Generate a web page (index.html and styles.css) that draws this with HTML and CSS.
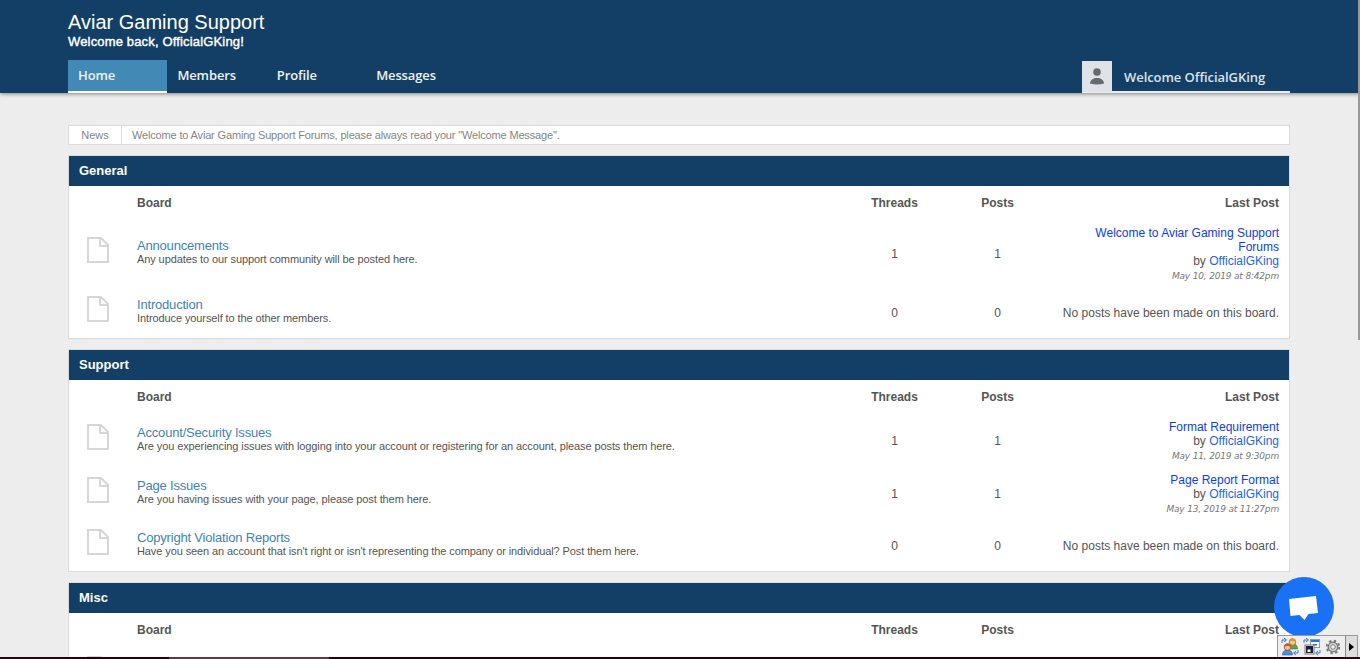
FILE: index.html
```
<!DOCTYPE html>
<html lang="en">
<head>
    <meta charset="UTF-8">
    <meta name="viewport" content="width=device-width, initial-scale=1.0">
    <title>Aviar Gaming Support</title>
    <link rel="stylesheet" href="styles.css">
</head>
<body>
    <svg width="0" height="0" class="sprites">
        <symbol id="page" viewBox="0 0 22 26">
            <path d="M1 1H14L21 8V25H1Z M13 1V9H21" fill="none" stroke="#d6d6d6" stroke-width="2"/>
        </symbol>
    </svg>
    <header class="header">
        <div class="wrapper">
            <h1 class="title">Aviar Gaming Support</h1>
            <div class="subtitle">Welcome back, OfficialGKing!</div>
            <div class="bar">
                <nav class="menu">
                    <a href="#" class="active">Home</a>
                    <a href="#">Members</a>
                    <a href="#">Profile</a>
                    <a href="#">Messages</a>
                </nav>
                <div class="welcome">
                    <div class="avatar">
                        <svg width="14" height="17" viewBox="0 0 14 17"><circle cx="7" cy="4" r="3.8" fill="#666a6e"/><path d="M0 15.5C0 8 14 8 14 15.5Q7 17.5 0 15.5Z" fill="#666a6e"/></svg>
                    </div>
                    <span>Welcome OfficialGKing</span>
                </div>
            </div>
        </div>
    </header>

    <main class="wrapper content">
        <div class="news">
            <div class="news-label">News</div>
            <div class="news-text">Welcome to Aviar Gaming Support Forums, please always read your "Welcome Message".</div>
        </div>

        <section class="category">
            <h2>General</h2>
            <table>
                <tr class="head"><th class="icon"></th><th class="board">Board</th><th class="count">Threads</th><th class="count">Posts</th><th class="last">Last Post</th></tr>
                <tr class="tall">
                    <td class="icon"><svg width="22" height="26"><use href="#page"/></svg></td>
                    <td class="board"><a href="#">Announcements</a><p>Any updates to our support community will be posted here.</p></td>
                    <td class="count">1</td>
                    <td class="count">1</td>
                    <td class="last"><a href="#">Welcome to Aviar Gaming Support Forums</a><div>by <a href="#" class="user">OfficialGKing</a></div><time>May 10, 2019 at 8:42pm</time></td>
                </tr>
                <tr class="empty">
                    <td class="icon"><svg width="22" height="26"><use href="#page"/></svg></td>
                    <td class="board"><a href="#">Introduction</a><p>Introduce yourself to the other members.</p></td>
                    <td class="count">0</td>
                    <td class="count">0</td>
                    <td class="last">No posts have been made on this board.</td>
                </tr>
            </table>
        </section>

        <section class="category">
            <h2>Support</h2>
            <table>
                <tr class="head"><th class="icon"></th><th class="board">Board</th><th class="count">Threads</th><th class="count">Posts</th><th class="last">Last Post</th></tr>
                <tr>
                    <td class="icon"><svg width="22" height="26"><use href="#page"/></svg></td>
                    <td class="board"><a href="#">Account/Security Issues</a><p>Are you experiencing issues with logging into your account or registering for an account, please posts them here.</p></td>
                    <td class="count">1</td>
                    <td class="count">1</td>
                    <td class="last"><a href="#">Format Requirement</a><div>by <a href="#" class="user">OfficialGKing</a></div><time>May 11, 2019 at 9:30pm</time></td>
                </tr>
                <tr>
                    <td class="icon"><svg width="22" height="26"><use href="#page"/></svg></td>
                    <td class="board"><a href="#">Page Issues</a><p>Are you having issues with your page, please post them here.</p></td>
                    <td class="count">1</td>
                    <td class="count">1</td>
                    <td class="last"><a href="#">Page Report Format</a><div>by <a href="#" class="user">OfficialGKing</a></div><time>May 13, 2019 at 11:27pm</time></td>
                </tr>
                <tr class="empty">
                    <td class="icon"><svg width="22" height="26"><use href="#page"/></svg></td>
                    <td class="board"><a href="#">Copyright Violation Reports</a><p>Have you seen an account that isn't right or isn't representing the company or individual? Post them here.</p></td>
                    <td class="count">0</td>
                    <td class="count">0</td>
                    <td class="last">No posts have been made on this board.</td>
                </tr>
            </table>
        </section>

        <section class="category">
            <h2>Misc</h2>
            <table>
                <tr class="head"><th class="icon"></th><th class="board">Board</th><th class="count">Threads</th><th class="count">Posts</th><th class="last">Last Post</th></tr>
                <tr class="empty">
                    <td class="icon"><svg width="22" height="26"><use href="#page"/></svg></td>
                    <td class="board"></td>
                    <td class="count"></td>
                    <td class="count"></td>
                    <td class="last"></td>
                </tr>
            </table>
        </section>
    </main>

    <div class="scrollbar"></div>
    <div class="chat">
        <svg width="60" height="60" viewBox="0 0 60 60"><path d="M15 22L42 19L44 36L34.500 37L30.500 43L25.500 38L16.500 39Z" fill="#fff"/></svg>
    </div>
    <div class="toolbar">
        <svg width="18" height="18" viewBox="0 0 18 18">
            <path d="M1 5V2H5M3 0L5.500 2L3 4M17 12V15H13M15 13L12.500 15L15 17" fill="none" stroke="#3c78e0"/>
            <path d="M7 11Q7 6 12 6Q16.500 6 16.500 11Z" fill="#5fa548" stroke="#3b7a30" stroke-width=".6"/>
            <circle cx="11.500" cy="4" r="3.300" fill="#f3c391" stroke="#a86c18" stroke-width=".8"/>
            <path d="M8.200 3.500Q9 0 12 .4Q15 1 14.800 4Q12 2 8.200 3.500Z" fill="#d89a28"/>
            <path d="M1.500 17Q1.500 12 6.500 12Q11.500 12 11.500 17Z" fill="#4c8fd4" stroke="#2c5f9c" stroke-width=".6"/>
            <circle cx="6.500" cy="9" r="3.300" fill="#f3c391" stroke="#9c4e1c" stroke-width=".8"/>
            <path d="M3.200 9Q3.500 5.500 6.500 5.500Q9.500 5.500 9.800 9Q7 7 3.200 9Z" fill="#b8622a"/>
        </svg>
        <svg width="18" height="18" viewBox="0 0 18 18">
            <path d="M1 5V2H5M3 0L5.500 2L3 4M17 12V15H13M15 13L12.500 15L15 17" fill="none" stroke="#3c78e0"/>
            <rect x="7.500" y="1.500" width="9" height="8" fill="#fff" stroke="#999"/>
            <path d="M8 2H16V4H8ZM10 6H14V7.500H10Z" fill="#1878e8"/>
            <rect x="2" y="7" width="9" height="9" fill="#fff" stroke="#777"/>
            <path d="M3 8H10V15H3Z" fill="#1c1c3c"/><path d="M4.500 11.500H7.500V14H4.500Z" fill="#fff"/>
        </svg>
        <svg width="16" height="16" viewBox="0 0 16 16">
            <circle cx="8" cy="8" r="6.300" fill="none" stroke="#777" stroke-width="1.800" stroke-dasharray="2.500 2.448"/>
            <circle cx="8" cy="8" r="4.700" fill="#ddd" stroke="#777" stroke-width="1.500"/>
            <circle cx="8" cy="8" r="2.300" fill="#f4f4f4" stroke="#777"/>
        </svg>
        <div class="expand"><svg width="5" height="8" viewBox="0 0 5 8"><path d="M0 0L5 4L0 8Z" fill="#000"/></svg></div>
    </div>
    <div class="taskbar"><div class="task"></div></div>
</body>
</html>
```
FILE: styles.css
```
html, body {
    height: 100%;
    overflow: hidden;
}
body {
    margin: 0;
    background-color: #ededed;
    font-family: "Liberation Sans", Arial, sans-serif;
    font-size: 12px;
    line-height: 14px;
    color: #555;
}
a {
    text-decoration: none;
}
h1, h2, p {
    margin: 0;
}
.sprites {
    position: absolute;
}
.wrapper {
    width: 1222px;
    margin-left: 68px;
}
.header {
    height: 93px;
    background: #133f67;
    color: #fff;
    box-shadow: 0 1px 4px rgba(0, 0, 0, 0.45);
}
.title {
    padding-top: 10px;
    font-size: 20px;
    font-weight: normal;
    line-height: 24px;
}
.subtitle {
    height: 26px;
    font-size: 13px;
    line-height: 15px;
    letter-spacing: 0.16px;
    -webkit-text-stroke: 0.4px #fff;
}
.bar {
    display: flex;
    justify-content: space-between;
    height: 33px;
    font-family: "Open Sans", sans-serif;
    font-size: 13px;
    font-weight: 600;
    letter-spacing: -0.12px;
}
.menu {
    display: flex;
}
.menu a {
    box-sizing: border-box;
    width: 99.4px;
    height: 33px;
    padding-left: 10px;
    color: #eef2f5;
    line-height: 31px;
}
.menu .active {
    background: #428ab5;
    border-bottom: 2px solid #fff;
}
.welcome {
    box-sizing: border-box;
    display: flex;
    width: 208px;
    height: 32px;
    margin-top: 1px;
    border-bottom: 2px solid #e9edf0;
    color: #dbe3ea;
    line-height: 32px;
    letter-spacing: -0.06px;
}
.avatar {
    display: flex;
    justify-content: center;
    align-items: center;
    width: 30px;
    height: 31px;
    margin-right: 12px;
    background: #dfe3e7;
}
.content {
    height: 534px;
    padding-top: 32px;
    overflow: hidden;
}
.news {
    display: flex;
    box-sizing: border-box;
    height: 20px;
    border: 1px solid #dcdcdc;
    background: #fff;
    font-size: 11px;
    line-height: 18px;
    color: #858585;
}
.news-label {
    width: 52px;
    border-right: 1px solid #dcdcdc;
    text-align: center;
}
.news-text {
    padding-left: 10px;
    letter-spacing: -0.16px;
}
.category {
    margin-top: 10px;
    border: 1px solid #dcdcdc;
    background: #fff;
}
.category h2 {
    height: 30px;
    padding-left: 10px;
    background: #133f67;
    color: #fff;
    font-size: 13px;
    line-height: 29px;
}
table {
    width: 100%;
    table-layout: fixed;
    border-collapse: collapse;
}
tr {
    height: 53px;
}
.head {
    height: 34px;
}
.tall {
    height: 67px;
}
.empty {
    height: 51px;
}
th, td {
    padding: 0;
    text-align: left;
}
.icon {
    width: 58px;
    text-align: center;
}
.icon svg {
    display: block;
    margin: 0 auto 7px 18px;
}
.board {
    padding-left: 10px;
}
td.board {
    padding-bottom: 3px;
}
.board a {
    display: block;
    margin-bottom: -2px;
    color: #3f83b5;
    font-size: 13px;
    line-height: 16px;
    letter-spacing: -0.19px;
}
.board p {
    font-size: 11px;
    letter-spacing: -0.1px;
}
.count {
    width: 103px;
    text-align: center;
}
.last {
    width: 220px;
    padding: 0 10px;
    text-align: right;
}
.last a {
    color: #0c3cf5;
}
.last .user {
    color: #1a66e8;
}
time {
    display: block;
    margin-bottom: -2px;
    font-family: "DejaVu Sans", Verdana, sans-serif;
    font-size: 9px;
    font-style: italic;
    line-height: 16px;
    letter-spacing: -0.18px;
    color: #777;
}
.scrollbar {
    position: absolute;
    top: 0;
    right: 0;
    width: 2px;
    height: 340px;
    background: #999;
}
.chat {
    position: absolute;
    left: 1274px;
    top: 577px;
    width: 60px;
    height: 60px;
    border-radius: 50%;
    background: #1972f5;
}
.toolbar {
    position: absolute;
    left: 1277px;
    top: 635px;
    box-sizing: border-box;
    display: flex;
    align-items: center;
    gap: 4px;
    width: 81px;
    height: 22px;
    padding-left: 3px;
    border: 1px solid #999;
    border-bottom: 0;
    background: #eee;
}
.expand {
    display: flex;
    align-items: center;
    justify-content: center;
    align-self: stretch;
    width: 11px;
    border-left: 1px solid #888;
    background: #ddd;
}
.taskbar {
    position: absolute;
    left: 0;
    right: 0;
    bottom: 0;
    height: 2px;
    padding-left: 169px;
    background: #23040a;
}
.task {
    width: 160px;
    height: 2px;
    background: #5a3e42;
}
```
